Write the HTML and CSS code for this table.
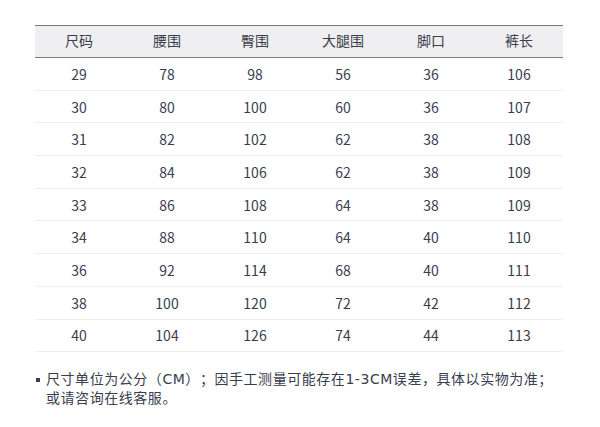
FILE: index.html
```html
<!DOCTYPE html>
<html lang="zh">
<head>
<meta charset="utf-8">
<link rel="stylesheet" href="styles.css">
</head>
<body>
<div class="wrap">
  <div class="table">
    <div class="row head"><div>尺码</div><div>腰围</div><div>臀围</div><div>大腿围</div><div>脚口</div><div>裤长</div></div>
    <div class="row"><div>29</div><div>78</div><div>98</div><div>56</div><div>36</div><div>106</div></div>
    <div class="row"><div>30</div><div>80</div><div>100</div><div>60</div><div>36</div><div>107</div></div>
    <div class="row"><div>31</div><div>82</div><div>102</div><div>62</div><div>38</div><div>108</div></div>
    <div class="row"><div>32</div><div>84</div><div>106</div><div>62</div><div>38</div><div>109</div></div>
    <div class="row"><div>33</div><div>86</div><div>108</div><div>64</div><div>38</div><div>109</div></div>
    <div class="row"><div>34</div><div>88</div><div>110</div><div>64</div><div>40</div><div>110</div></div>
    <div class="row"><div>36</div><div>92</div><div>114</div><div>68</div><div>40</div><div>111</div></div>
    <div class="row"><div>38</div><div>100</div><div>120</div><div>72</div><div>42</div><div>112</div></div>
    <div class="row"><div>40</div><div>104</div><div>126</div><div>74</div><div>44</div><div>113</div></div>
  </div>
  <div class="note">
    <span class="bullet"></span>
    <p>尺寸单位为公分（CM）；因手工测量可能存在1-3CM误差，具体以实物为准；<br>或请咨询在线客服。</p>
  </div>
</div>
</body>
</html>
```
FILE: styles.css
```css
html, body {
  margin: 0;
  padding: 0;
  background: #ffffff;
}
body {
  font-family: "Noto Sans CJK SC", "Noto Sans", sans-serif;
  color: #3a3d4e;
}
.wrap {
  padding: 25px 0 0 35px;
  width: 528px;
}
.table {
  display: flex;
  flex-direction: column;
}
.row {
  display: grid;
  grid-template-columns: repeat(6, 1fr);
  height: 32.7px;
  align-items: center;
  border-bottom: 1px solid #f0f0f1;
  box-sizing: border-box;
  font-size: 14px;
}
.row > div {
  text-align: center;
  line-height: 1;
}
.row.head {
  height: 33px;
  padding-bottom: 3px;
  background: #efeff1;
  border-top: 1.5px solid #7b7b7e;
  border-bottom: 1.5px solid #7b7b7e;
}
.note {
  display: flex;
  align-items: flex-start;
  margin-top: 18px;
  margin-left: 1px;
  gap: 6px;
}
.bullet {
  width: 4px;
  height: 4px;
  background: #3a3d4e;
  margin-top: 8px;
  flex: none;
}
.note p {
  margin: 0;
  font-family: "DejaVu Sans", "Noto Sans CJK SC", sans-serif;
  font-size: 14px;
  line-height: 19px;
  letter-spacing: 0.55px;
  text-spacing-trim: space-all;
  white-space: nowrap;
}
```
